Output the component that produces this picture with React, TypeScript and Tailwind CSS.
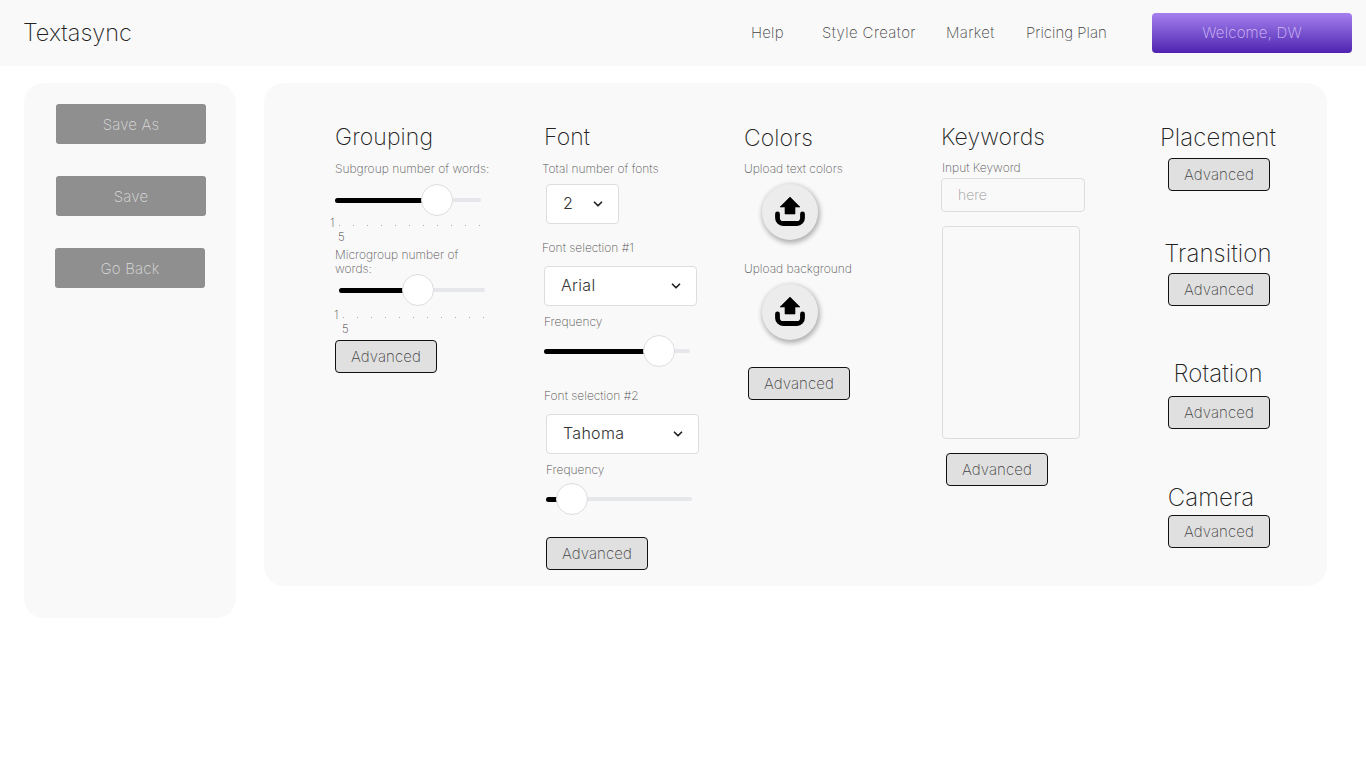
import React from 'react';
import { ChevronDown } from 'lucide-react';

const titleCls = 'text-[23px] leading-[30px] font-extralight text-[#222] tracking-[0.1px] whitespace-nowrap';
const sideTitleCls = 'text-[24px] leading-[30px] font-extralight text-[#222] tracking-[0.1px] whitespace-nowrap';
const labelCls = 'text-[12px] leading-[14px] font-extralight text-[#555] whitespace-nowrap';

const AdvancedButton = ({ className = '' }: { className?: string }) => (
  <button className={`w-[102px] h-[33px] shrink-0 pt-px bg-[#e0e0e0] border border-[#111] rounded-[4px] text-[15px] font-extralight tracking-[0.1px] text-[#444] ${className}`}>
    Advanced
  </button>
);

const SideButton = ({ label, className = '' }: { label: string; className?: string }) => (
  <button className={`w-[150px] h-10 pt-[2px] bg-[#8f8f8f] rounded-[3px] text-[15px] font-extralight tracking-[0.2px] text-[#dcdcdc] ${className}`}>
    {label}
  </button>
);

const Slider = ({ thumb, className = '' }: { thumb: number; className?: string }) => (
  <div className={`relative w-[146px] h-8 flex items-center ${className}`}>
    <div className="w-full h-1 rounded-full bg-[#e5e7eb]" />
    <div className="absolute left-0 h-[5px] rounded-full bg-black" style={{ width: thumb }} />
    <div className="absolute top-0 w-8 h-8 rounded-full bg-white border border-[#ddd]" style={{ left: thumb - 16 }} />
  </div>
);

const Ticks = ({ className = '' }: { className?: string }) => (
  <div className={`relative w-[146px] h-7 ${className}`}>
    <span className="absolute left-[-5px] top-0 text-[11.5px] leading-[14px] font-extralight text-[#444]">1</span>
    <div className="absolute left-[4px] top-[9px] w-[141px] flex justify-between">
      {Array.from({ length: 11 }).map((_, i) => (
        <span key={i} className="w-px h-px bg-[#aaa]" />
      ))}
    </div>
    <span className="absolute left-[3px] top-[14px] text-[11.5px] leading-[14px] font-extralight text-[#444]">5</span>
  </div>
);

const Select = ({ value, className = '' }: { value: string; className?: string }) => (
  <div className={`h-10 flex items-center justify-between bg-white border border-[#ddd] rounded-[4px] pl-4 pr-[13px] text-[16px] font-light tracking-[0.3px] text-[#333] ${className}`}>
    <span className="pb-[2px]">{value}</span>
    <ChevronDown size={14} strokeWidth={3} className="text-[#222]" />
  </div>
);

const UploadButton = ({ className = '' }: { className?: string }) => (
  <button className={`w-14 h-14 rounded-full bg-[#ececec] flex items-center justify-center shadow-[1px_2px_5px_1px_rgba(0,0,0,0.3)] ${className}`}>
    <svg width="30" height="30" viewBox="0 0 30 30">
      <path d="M15 0 L25 10 H20 V17 H10 V10 H5 Z" fill="#000" stroke="#000" strokeWidth="0.6" strokeLinejoin="round" />
      <path d="M2.5 17 V21 A5.5 5.5 0 0 0 8 26.5 H22 A5.5 5.5 0 0 0 27.5 21 V17" fill="none" stroke="#000" strokeWidth="4.8" strokeLinecap="round" />
    </svg>
  </button>
);

export default function App() {
  return (
    <div className="min-h-[760px] bg-white font-['Inter','Liberation_Sans',sans-serif]">
      <header className="h-[66px] bg-[#f9f9f9] flex items-center">
        <div className="ml-6 -translate-x-px text-[23.5px] font-extralight text-[#222]">Textasync</div>
        <nav className="ml-auto flex items-center text-[15px] font-extralight text-[#444]">
          <a className="w-[71px] tracking-[0.2px]">Help</a>
          <a className="w-[124px] tracking-[0.4px]">Style Creator</a>
          <a className="w-[80px] tracking-[0.3px]">Market</a>
          <a className="w-[126px]">Pricing Plan</a>
        </nav>
        <button className="w-[200px] h-10 mr-[14px] pt-px rounded-[4px] bg-gradient-to-b from-[#a67fee] to-[#5020b0] text-[15px] font-extralight tracking-[0.2px] text-[#d4bdf5]">
          Welcome, DW
        </button>
      </header>

      <main className="flex items-start mt-[17px] ml-6">
        <aside className="w-[212px] h-[535px] bg-[#f9f9f9] rounded-[20px] pt-[21px] pl-8 flex flex-col">
          <SideButton label="Save As" />
          <SideButton label="Save" className="mt-8" />
          <SideButton label="Go Back" className="mt-8 -ml-px" />
        </aside>

        <section className="w-[1063px] h-[503px] ml-7 bg-[#f9f9f9] rounded-[20px] pt-[39px] pl-[71px] flex items-start">
          <div className="w-[209px] flex flex-col items-start">
            <h2 className={titleCls}>Grouping</h2>
            <p className={`${labelCls} mt-[10px]`}>Subgroup number of words:</p>
            <Slider thumb={102} className="mt-2" />
            <Ticks />
            <p className={`${labelCls} mt-1 w-[155px] !whitespace-normal`}>Microgroup number of words:</p>
            <Slider thumb={79} className="-mt-[2px] ml-1" />
            <Ticks className="mt-[2px] ml-1" />
            <AdvancedButton className="mt-1" />
          </div>

          <div className="w-[200px] flex flex-col items-start">
            <h2 className={titleCls}>Font</h2>
            <p className={`${labelCls} mt-[10px] -ml-[2px]`}>Total number of fonts</p>
            <Select value="2" className="mt-2 ml-[2px] w-[73px]" />
            <p className={`${labelCls} mt-[17px] -ml-[2px]`}>Font selection #1</p>
            <Select value="Arial" className="mt-[11px] w-[153px]" />
            <p className={`${labelCls} mt-[9px]`}>Frequency</p>
            <Slider thumb={115} className="mt-[6px]" />
            <p className={`${labelCls} mt-[22px]`}>Font selection #2</p>
            <Select value="Tahoma" className="mt-[11px] ml-[2px] w-[153px]" />
            <p className={`${labelCls} mt-[9px] ml-[2px]`}>Frequency</p>
            <Slider thumb={26} className="mt-[6px] ml-[2px]" />
            <AdvancedButton className="mt-[22px] ml-[2px]" />
          </div>

          <div className="w-[197px] flex flex-col items-start">
            <h2 className={`${titleCls} mt-px`}>Colors</h2>
            <p className={`${labelCls} mt-[9px]`}>Upload text colors</p>
            <UploadButton className="mt-2 ml-[18px]" />
            <p className={`${labelCls} mt-[22px]`}>Upload background</p>
            <UploadButton className="mt-2 ml-[18px]" />
            <AdvancedButton className="mt-[27px] ml-1" />
          </div>

          <div className="w-[190px] flex flex-col items-start">
            <h2 className={titleCls}>Keywords</h2>
            <p className={`${labelCls} mt-[9px] ml-px`}>Input Keyword</p>
            <input
              placeholder="here"
              className="mt-[3px] w-[144px] h-[34px] pb-px bg-transparent border border-[#ddd] rounded-[4px] pl-4 text-[14px] font-extralight placeholder:text-[#999] outline-none"
            />
            <textarea className="mt-[14px] ml-px w-[138px] h-[213px] bg-transparent border border-[#ddd] rounded-[4px] resize-none outline-none" />
            <AdvancedButton className="mt-[14px] ml-[5px]" />
          </div>

          <div className="w-[176px] flex flex-col items-center">
            <h2 className={`${sideTitleCls} mt-px -ml-[2px]`}>Placement</h2>
            <AdvancedButton className="mt-[5px]" />
            <h2 className={`${sideTitleCls} mt-12 -ml-[2px]`}>Transition</h2>
            <AdvancedButton className="mt-1" />
            <h2 className={`${sideTitleCls} mt-[53px] -ml-[2px]`}>Rotation</h2>
            <AdvancedButton className="mt-[7px]" />
            <h2 className={`${sideTitleCls} mt-[54px] -ml-4`}>Camera</h2>
            <AdvancedButton className="mt-[2px]" />
          </div>
        </section>
      </main>
    </div>
  );
}
